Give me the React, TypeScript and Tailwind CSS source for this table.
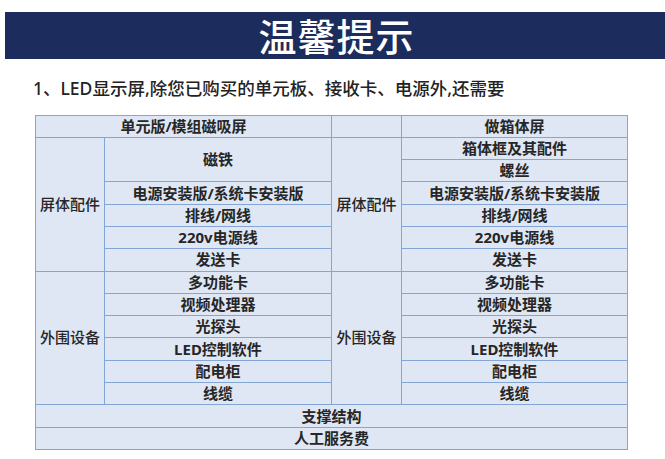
const font = { fontFamily: '"Noto Sans", "Noto Sans CJK SC", sans-serif' };

const cell =
  'flex items-center justify-center bg-[#dfe7f4] text-[15px] font-bold text-[#262626] leading-none';
const cat =
  'flex items-center justify-center bg-[#dfe7f4] text-[15px] font-medium text-[#262626] leading-none';

const leftItems = ['电源安装版/系统卡安装版', '排线/网线', '220v电源线', '发送卡'];
const periph = ['多功能卡', '视频处理器', '光探头', 'LED控制软件', '配电柜', '线缆'];

export default function App() {
  return (
    <div className="w-[665px] h-[459px] bg-white overflow-hidden" style={font}>
      <div className="pt-[12px] pl-[5px]">
        <div className="h-[47px] bg-[#1b2c5d] flex items-center justify-center">
          <span className="text-white text-[38px] font-medium leading-none tracking-[1px] pl-[3px]">
            温馨提示
          </span>
        </div>
      </div>

      <div className="mt-[21px] ml-[33px] text-[17.5px] text-[#222] leading-none font-medium">
        1、LED显示屏,除您已购买的单元板、接收卡、电源外,还需要
      </div>

      <div className="mt-[17px] ml-[35px] w-[593px] bg-[#84a6d6] p-px grid gap-px grid-cols-[68px_226px_69px_225px] grid-rows-[repeat(15,21.3px)]">
        <div className={`${cell} col-span-2 bg-[#c2d4ed]`}>单元版/模组磁吸屏</div>
        <div className={`${cell} bg-[#c2d4ed]`}></div>
        <div className={`${cell} bg-[#c2d4ed]`}>做箱体屏</div>

        <div className={`${cat} row-start-2 row-span-6 col-start-1`}>屏体配件</div>
        <div className={`${cell} row-start-2 row-span-2 col-start-2`}>磁铁</div>
        {leftItems.map((t, i) => (
          <div key={t} className={`${cell} col-start-2`} style={{ gridRowStart: i + 4 }}>
            {t}
          </div>
        ))}

        <div className={`${cat} row-start-2 row-span-6 col-start-3`}>屏体配件</div>
        <div className={`${cell} row-start-2 col-start-4`}>箱体框及其配件</div>
        <div className={`${cell} row-start-3 col-start-4`}>螺丝</div>
        {leftItems.map((t, i) => (
          <div key={t} className={`${cell} col-start-4`} style={{ gridRowStart: i + 4 }}>
            {t}
          </div>
        ))}

        <div className={`${cat} row-start-8 row-span-6 col-start-1`}>外围设备</div>
        {periph.map((t, i) => (
          <div key={t} className={`${cell} col-start-2`} style={{ gridRowStart: i + 8 }}>
            {t}
          </div>
        ))}
        <div className={`${cat} row-start-8 row-span-6 col-start-3`}>外围设备</div>
        {periph.map((t, i) => (
          <div key={t} className={`${cell} col-start-4`} style={{ gridRowStart: i + 8 }}>
            {t}
          </div>
        ))}

        <div className={`${cell} row-start-[14] col-span-4 col-start-1`}>支撑结构</div>
        <div className={`${cell} row-start-[15] col-span-4 col-start-1`}>人工服务费</div>
      </div>
    </div>
  );
}
